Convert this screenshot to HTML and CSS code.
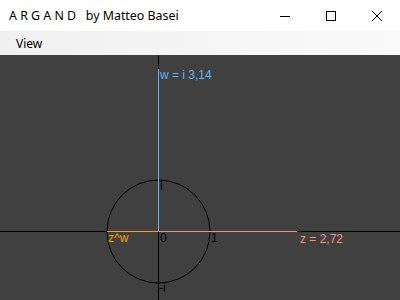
FILE: index.html
```html
<!DOCTYPE html>
<html>
<head>
  <meta charset="utf-8">
  <title>ARGAND</title>
  <link rel="stylesheet" href="styles.css">
</head>
<body>
<div class="window">
  <div class="titlebar">
    <span class="title">A R G A N D   by Matteo Basei</span>
    <div class="controls">
      <span class="ctl">
        <svg width="10" height="10" viewBox="0 0 10 10"><path d="M0 5.5h10" stroke="#000" stroke-width="1"/></svg>
      </span>
      <span class="ctl">
        <svg width="10" height="10" viewBox="0 0 10 10"><rect x="0.5" y="0.5" width="9" height="9" fill="none" stroke="#000"/></svg>
      </span>
      <span class="ctl">
        <svg width="10" height="10" viewBox="0 0 10 10"><path d="M0 0L10 10M10 0L0 10" stroke="#000" stroke-width="1"/></svg>
      </span>
    </div>
  </div>
  <div class="menubar">
    <span class="menu-item">View</span>
  </div>
  <div class="canvas">
    <svg class="plane" width="400" height="245" viewBox="0 0 400 245">
      <!-- axes -->
      <line x1="0" y1="176.5" x2="400" y2="176.5" class="axis"/>
      <line x1="158.5" y1="0" x2="158.5" y2="245" class="axis"/>
      <!-- unit circle -->
      <circle cx="158.5" cy="176.5" r="51.5" class="unit"/>
      <!-- vectors -->
      <line x1="158.5" y1="176.5" x2="297" y2="176.5" class="vec-z"/>
      <line x1="158.5" y1="176.5" x2="158.5" y2="14" class="vec-w"/>
      <line x1="107" y1="176.5" x2="158.5" y2="176.5" class="vec-zw"/>
      <!-- labels -->
      <text x="160" y="135" class="lbl">i</text>
      <text x="160" y="187" class="lbl">0</text>
      <text x="211" y="187" class="lbl">1</text>
      <text x="159" y="237" class="lbl">-i</text>
      <text x="108" y="187" class="lbl lbl-zw">z^w</text>
      <text x="160" y="24" class="lbl lbl-w">w = i 3,14</text>
      <text x="300" y="188" class="lbl lbl-z">z = 2,72</text>
    </svg>
  </div>
</div>
</body>
</html>
```

FILE: styles.css
```css
html, body {
  margin: 0;
  padding: 0;
}

body {
  width: 400px;
  height: 300px;
  overflow: hidden;
  font-family: "Noto Sans", "Open Sans", sans-serif;
}

.window {
  display: flex;
  flex-direction: column;
  height: 300px;
}

.titlebar {
  height: 31px;
  background: #fff;
  display: flex;
  align-items: center;
  justify-content: space-between;
}

.title {
  white-space: pre;
  font-size: 12.4px;
  color: #000;
  padding-left: 9px;
}

.controls {
  display: flex;
  height: 100%;
}

.ctl {
  width: 46px;
  display: flex;
  align-items: center;
  justify-content: center;
}

.menubar {
  height: 24px;
  background: linear-gradient(to right, #f0f0f0, #fafafa);
  display: flex;
  align-items: center;
}

.menu-item {
  font-size: 12px;
  padding: 0 7px 0 16px;
  color: #000;
}

.canvas {
  flex: 1;
  background: #404040;
}

.plane {
  display: block;
}

.axis {
  stroke: #000;
  stroke-width: 1;
}

.unit {
  fill: none;
  stroke: #000;
  stroke-width: 1;
}

.vec-z {
  stroke: #f09090;
}

.vec-w {
  stroke: #64b4f0;
}

.vec-zw {
  stroke: #f5a000;
}

.lbl {
  font-family: "Liberation Sans", Arial, sans-serif;
  font-size: 12px;
  fill: #000;
}

.lbl-zw {
  fill: #f5a000;
}

.lbl-w {
  fill: #64b4f0;
}

.lbl-z {
  fill: #f09090;
}
```
